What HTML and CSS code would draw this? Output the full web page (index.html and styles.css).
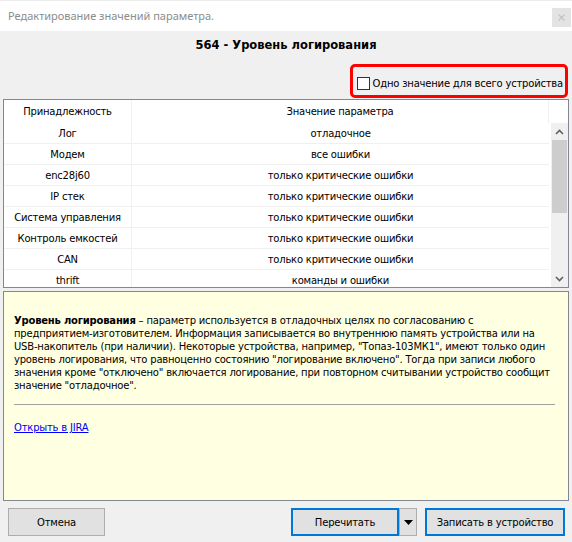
FILE: index.html
```html
<!DOCTYPE html>
<html lang="ru">
<head>
<meta charset="utf-8">
<title>Редактирование значений параметра.</title>
<link rel="stylesheet" href="styles.css">
</head>
<body>
<div class="titlebar">
  <span class="title">Редактирование значений параметра.</span>
  <span class="close"><svg width="7" height="7" viewBox="0 0 7 7"><path d="M0.5 0.5 L6.5 6.5 M6.5 0.5 L0.5 6.5" stroke="#c4c4c4" stroke-width="1.3" fill="none"/></svg></span>
</div>
<div class="dialog">
  <div class="heading">564 - Уровень логирования</div>
  <div class="optrow">
    <label class="opt"><span class="cb"></span><span>Одно значение для всего устройства</span></label>
  </div>
  <div class="grid">
    <div class="ghead">
      <div class="c1">Принадлежность</div>
      <div class="c2">Значение параметра</div>
      <div class="c3"></div>
    </div>
    <div class="gbody">
      <div class="rows">
        <div class="row"><div class="c1">Лог</div><div class="c2">отладочное</div></div>
        <div class="row"><div class="c1">Модем</div><div class="c2">все ошибки</div></div>
        <div class="row"><div class="c1">enc28j60</div><div class="c2">только критические ошибки</div></div>
        <div class="row"><div class="c1">IP стек</div><div class="c2">только критические ошибки</div></div>
        <div class="row"><div class="c1">Система управления</div><div class="c2">только критические ошибки</div></div>
        <div class="row"><div class="c1">Контроль емкостей</div><div class="c2">только критические ошибки</div></div>
        <div class="row"><div class="c1">CAN</div><div class="c2">только критические ошибки</div></div>
        <div class="row"><div class="c1">thrift</div><div class="c2">команды и ошибки</div></div>
      </div>
      <div class="sgap"></div>
      <div class="sbar">
        <div class="sbtn"><svg width="9" height="6" viewBox="0 0 9 6"><path d="M1 5 L4.5 1.5 L8 5" stroke="#606060" stroke-width="1.6" fill="none"/></svg></div>
        <div class="thumb"></div>
        <div class="strack"></div>
        <div class="sbtn"><svg width="9" height="6" viewBox="0 0 9 6"><path d="M1 1 L4.5 4.5 L8 1" stroke="#606060" stroke-width="1.6" fill="none"/></svg></div>
      </div>
    </div>
  </div>
  <div class="info">
    <p class="desc"><b>Уровень логирования</b> – параметр используется в отладочных целях по согласованию с<br>предприятием-изготовителем. Информация записывается во внутреннюю память устройства или на<br>USB-накопитель (при наличии). Некоторые устройства, например, "Топаз-103МК1", имеют только один<br>уровень логирования, что равноценно состоянию "логирование включено". Тогда при записи любого<br>значения кроме "отключено" включается логирование, при повторном считывании устройство сообщит<br>значение "отладочное".</p>
    <hr class="sep">
    <a class="link" href="#">Открыть в JIRA</a>
  </div>
  <div class="buttons">
    <button class="btn cancel">Отмена</button>
    <div class="right">
      <button class="btn primary reread">Перечитать</button>
      <button class="btn drop"><svg width="9" height="5" viewBox="0 0 9 5"><path d="M0 0 L9 0 L4.5 5 Z" fill="#000"/></svg></button>
      <button class="btn primary write">Записать в устройство</button>
    </div>
  </div>
</div>
</body>
</html>
```

FILE: styles.css
```css
html, body {
  margin: 0;
  padding: 0;
  background: #f0f0f0;
}
body {
  width: 572px;
  height: 542px;
  overflow: hidden;
  font-family: "DejaVu Sans", Tahoma, sans-serif;
  font-size: 10px;
  letter-spacing: -0.2px;
  color: #000;
}
.titlebar {
  height: 31px;
  background: #fff;
  border-top: 1px solid #ececec;
  box-sizing: border-box;
  display: flex;
  align-items: center;
  justify-content: space-between;
}
.title {
  font-family: "Noto Sans", "Open Sans", sans-serif;
  font-size: 11px;
  letter-spacing: 0;
  color: #8c8c8c;
  padding-left: 8px;
  margin-top: -2px;
}
.close {
  width: 19px;
  height: 19px;
  background: #e3e3e3;
  margin-right: 1px;
  margin-top: 3px;
  display: flex;
  align-items: center;
  justify-content: center;
}
.dialog {
  display: flex;
  flex-direction: column;
}
.heading {
  height: 33px;
  box-sizing: border-box;
  padding-top: 7px;
  text-align: center;
  font-family: "DejaVu Sans", sans-serif;
  font-weight: bold;
  font-size: 11.5px;
  letter-spacing: 0;
  line-height: 15px;
}
.optrow {
  display: flex;
  justify-content: flex-end;
  padding-right: 4px;
  height: 35px;
}
.opt {
  display: flex;
  align-items: center;
  gap: 3px;
  border: 3px solid #ff0000;
  border-radius: 5px;
  padding: 9px 2px 4px 4px;
  box-sizing: border-box;
  height: 34px;
  white-space: nowrap;
}
.cb {
  width: 11px;
  height: 11px;
  border: 1px solid #333;
  background: #fff;
}
.grid {
  margin: 0 3px;
  height: 189px;
  border: 1px solid #828790;
  box-sizing: border-box;
  background: #fff;
  display: flex;
  flex-direction: column;
}
.ghead {
  display: flex;
  height: 23px;
  flex: none;
}
.c1 {
  width: 127px;
  border-right: 1px solid #f0f0f0;
  display: flex;
  align-items: center;
  justify-content: center;
  white-space: nowrap;
  flex: none;
}
.ghead .c2 {
  width: 416px;
  border-right: 1px solid #f0f0f0;
}
.c2 {
  display: flex;
  align-items: center;
  justify-content: center;
  white-space: nowrap;
  flex: none;
  width: 417px;
}
.c3 {
  flex: 1;
}
.gbody {
  display: flex;
  flex: 1;
  min-height: 0;
}
.rows {
  width: 545px;
  overflow: hidden;
  flex: none;
}
.row {
  display: flex;
  height: 21px;
  border-bottom: 1px solid #f0f0f0;
  box-sizing: border-box;
}
.sgap {
  width: 2px;
  flex: none;
}
.sbar {
  width: 17px;
  flex: none;
  background: #f0f0f0;
  display: flex;
  flex-direction: column;
}
.sbtn {
  height: 17px;
  display: flex;
  align-items: center;
  justify-content: center;
  flex: none;
}
.thumb {
  height: 73px;
  margin: 0 1px;
  background: #cdcdcd;
  flex: none;
}
.strack {
  flex: 1;
}
.info {
  margin: 3px 3px 0;
  height: 210px;
  box-sizing: border-box;
  border: 1px solid #828790;
  background: #ffffe1;
  padding: 22px 10px 0;
}
.desc {
  margin: 0;
  line-height: 13px;
  white-space: nowrap;
}
.sep {
  margin: 12px 3px 0 0;
  border: 0;
  border-top: 1px solid #a0a0a0;
  height: 0;
}
.link {
  display: inline-block;
  margin-top: 17px;
  color: #0000ff;
  text-decoration: underline;
}
.buttons {
  display: flex;
  justify-content: space-between;
  padding: 7px 7px 0 8px;
}
.right {
  display: flex;
}
.btn {
  font-family: "DejaVu Sans", sans-serif;
  font-size: 10px;
  letter-spacing: -0.2px;
  color: #000;
  background: #e1e1e1;
  border: 1px solid #adadad;
  height: 28px;
  box-sizing: border-box;
  padding: 0;
  margin: 0;
  display: flex;
  align-items: center;
  justify-content: center;
}
.cancel {
  width: 97px;
}
.primary {
  border: 2px solid #0078d7;
}
.reread {
  width: 108px;
}
.drop {
  width: 18px;
  margin-left: 0;
  margin-right: 8px;
}
.write {
  width: 140px;
}
```
